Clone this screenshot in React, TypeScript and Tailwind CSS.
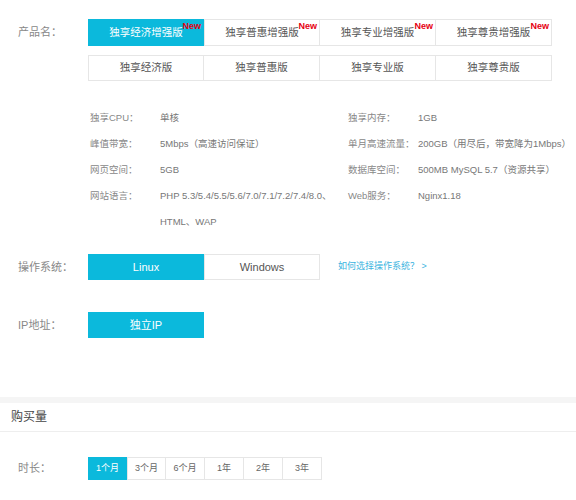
import React from "react";

const font = { fontFamily: '"Liberation Sans", "Noto Sans CJK SC", sans-serif' };

const plansTop = ["独享经济增强版", "独享普惠增强版", "独享专业增强版", "独享尊贵增强版"];
const plansBottom = ["独享经济版", "独享普惠版", "独享专业版", "独享尊贵版"];

const specs: [string, string, string, string][] = [
  ["独享CPU：", "单核", "独享内存：", "1GB"],
  ["峰值带宽：", "5Mbps（高速访问保证）", "单月高速流量：", "200GB（用尽后，带宽降为1Mbps）"],
  ["网页空间：", "5GB", "数据库空间：", "500MB MySQL 5.7（资源共享）"],
  ["网站语言：", "PHP 5.3/5.4/5.5/5.6/7.0/7.1/7.2/7.4/8.0、", "Web服务：", "Nginx1.18"],
  ["", "HTML、WAP", "", ""],
];

const durations = ["1个月", "3个月", "6个月", "1年", "2年", "3年"];

function Label({ children }: { children: React.ReactNode }) {
  return <div className="w-[88px] shrink-0 pl-[18px] text-[11px] text-[#888]">{children}</div>;
}

export default function App() {
  return (
    <div className="w-[576px] h-[500px] bg-white overflow-hidden" style={font}>
      {/* 产品名 */}
      <div className="flex items-start pt-[19px]">
        <div className="w-[88px] shrink-0 pl-[18px] text-[11px] text-[#888] leading-[27px]">产品名：</div>
        <div className="flex flex-col gap-[9px]">
          <div className="flex">
            {plansTop.map((p, i) => (
              <div
                key={p}
                className={`relative w-[116px] h-[27px] flex items-center justify-center text-[10.5px] border ${
                  i === 0 ? "bg-[#0bb9dc] border-[#0bb9dc] text-white" : "bg-white border-[#e6e6e6] text-[#555]"
                } ${i > 1 ? "border-l-0" : ""}`}
              >
                {p}
                <span className="absolute top-[2px] right-[2px] text-[9px] font-bold text-[#e60012] leading-none">New</span>
              </div>
            ))}
          </div>
          <div className="flex">
            {plansBottom.map((p, i) => (
              <div
                key={p}
                className={`w-[116px] h-[26px] flex items-center justify-center text-[10.5px] text-[#555] border border-[#e6e6e6] bg-white ${
                  i > 0 ? "border-l-0" : ""
                }`}
              >
                {p}
              </div>
            ))}
          </div>
        </div>
      </div>

      {/* 规格 */}
      <div className="mt-[24px] pl-[90px] text-[9.5px]">
        {specs.map((r, i) => (
          <div key={i} className="flex h-[26px] items-center whitespace-nowrap">
            <div className="w-[70px] text-[#888]">{r[0]}</div>
            <div className="w-[188px] text-[#777]">{r[1]}</div>
            <div className="w-[70px] text-[#888]">{r[2]}</div>
            <div className="text-[#777]">{r[3]}</div>
          </div>
        ))}
      </div>

      {/* 操作系统 */}
      <div className="flex items-center mt-[19px]">
        <Label>操作系统：</Label>
        <div className="flex">
          <div className="w-[116px] h-[26px] flex items-center justify-center text-[11px] text-white bg-[#0bb9dc]">Linux</div>
          <div className="w-[116px] h-[26px] flex items-center justify-center text-[11px] text-[#555] border border-[#e6e6e6]">Windows</div>
        </div>
        <a className="ml-[18px] text-[9px] text-[#3bb4e0]">如何选择操作系统？ &gt;</a>
      </div>

      {/* IP地址 */}
      <div className="flex items-center mt-[32px]">
        <Label>IP地址：</Label>
        <div className="w-[116px] h-[26px] flex items-center justify-center text-[11px] text-white bg-[#0bb9dc]">独立IP</div>
      </div>

      {/* 分隔 */}
      <div className="mt-[59px] h-[6px] bg-[#f5f5f5]" />

      {/* 购买量 */}
      <div className="h-[29px] flex items-center pl-[11px] text-[12px] text-[#444] border-b border-[#eeeeee]">购买量</div>

      <div className="flex items-center mt-[25px]">
        <Label>时长：</Label>
        <div className="flex">
          {durations.map((d, i) => (
            <div
              key={d}
              className={`w-[39px] h-[23px] flex items-center justify-center text-[9px] border ${
                i === 0 ? "bg-[#0bb9dc] border-[#0bb9dc] text-white" : "border-[#e6e6e6] text-[#666]"
              } ${i > 1 ? "border-l-0" : ""}`}
            >
              {d}
            </div>
          ))}
        </div>
      </div>
    </div>
  );
}
